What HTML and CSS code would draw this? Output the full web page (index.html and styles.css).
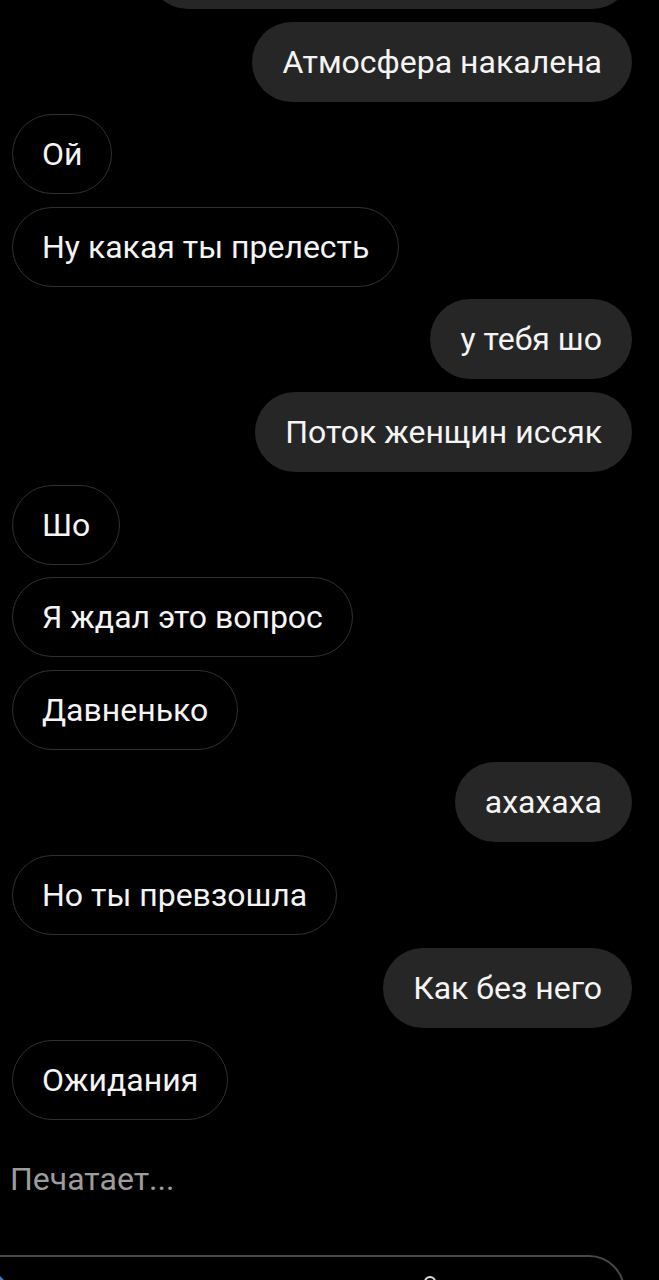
FILE: index.html
```html
<!DOCTYPE html>
<html lang="ru">
<head>
  <meta charset="UTF-8">
  <meta name="viewport" content="width=device-width, initial-scale=1.0">
  <title>Чат</title>

  <link rel="stylesheet" href="styles.css">
</head>
<body>
  <div class="chat">
    <div class="msg out msg-cut"></div>
    <div class="msg out">Атмосфера накалена</div>
    <div class="msg in">Ой</div>
    <div class="msg in">Ну какая ты прелесть</div>
    <div class="msg out">у тебя шо</div>
    <div class="msg out">Поток женщин иссяк</div>
    <div class="msg in">Шо</div>
    <div class="msg in">Я ждал это вопрос</div>
    <div class="msg in">Давненько</div>
    <div class="msg out">ахахаха</div>
    <div class="msg in">Но ты превзошла</div>
    <div class="msg out">Как без него</div>
    <div class="msg in">Ожидания</div>

    <p class="typing">Печатает...</p>

    <!-- message box, only its top edge is on screen -->
    <div class="composer">
      <span class="cam"></span>
      <svg class="mic" width="24" height="32" viewBox="0 0 24 32">
        <rect x="7" y="2" width="10" height="18" rx="5" fill="none" stroke="#ddd" stroke-width="2"/>
      </svg>
    </div>
  </div>
</body>
</html>
```

FILE: styles.css
```css
body {
  margin: 0;
  height: 1280px;
  overflow: hidden;
  background: #000;
  font-family: Roboto, "Noto Sans", sans-serif;
}

.chat {
  display: flex;
  flex-direction: column;
  gap: 12.6px;
  height: 1280px;
  overflow: hidden;
  padding: 0 27px 0 12px;
}

.msg {
  flex: none;
  box-sizing: border-box;
  height: 80px;
  padding: 0 30px;
  border-radius: 40px;
  display: flex;
  align-items: center;
  font-size: 32px;
  color: #f4f4f4;
  white-space: nowrap;
}

.msg.out {
  align-self: flex-end;
  background: #262626;
}

.msg.in {
  align-self: flex-start;
  padding: 0 29px;
  border: 1px solid #303030;
}

.msg-cut {
  width: 484px;
  margin-top: -71px;
}

.typing {
  flex: none;
  margin: 27px 0 0 -2px;
  font-size: 32px;
  color: #9c9c9c;
}

.composer {
  flex: none;
  align-self: flex-start;
  box-sizing: border-box;
  width: 665px;
  height: 90px;
  margin: 45px 0 0 -52px;
  padding: 14px 0 0 2px;
  border: 2px solid #474747;
  border-radius: 36px;
  display: flex;
  align-items: flex-start;
}

.cam {
  width: 44px;
  height: 44px;
  border-radius: 50%;
  background: #2f7fd0;
}

.mic {
  margin: 4px 0 0 410px;
}
```
